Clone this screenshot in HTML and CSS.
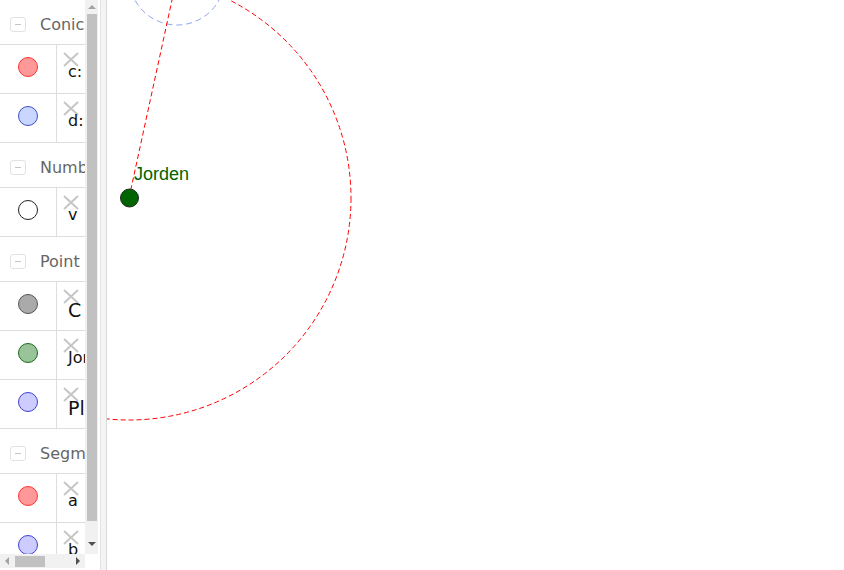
FILE: index.html
```html
<!DOCTYPE html>
<html>
<head>
<meta charset="utf-8">
<link rel="stylesheet" href="styles.css">
</head>
<body>
<div class="app">
  <aside class="sidebar">
    <div class="pane">
      <div class="list">
        <div class="group">
          <div class="head"><span class="toggle"><span class="minus"></span></span><span class="title">Conic</span></div>
          <div class="row">
            <div class="swatch"><span class="dot dot-red"></span></div>
            <div class="item"><svg class="del" viewBox="0 0 16 15"><path d="M1 1 L15 14 M15 1 L1 14"/></svg><span class="label">c:</span></div>
          </div>
          <div class="row">
            <div class="swatch"><span class="dot dot-blue"></span></div>
            <div class="item"><svg class="del" viewBox="0 0 16 15"><path d="M1 1 L15 14 M15 1 L1 14"/></svg><span class="label">d:</span></div>
          </div>
        </div>
        <div class="group">
          <div class="head"><span class="toggle"><span class="minus"></span></span><span class="title">Numbers</span></div>
          <div class="row">
            <div class="swatch"><span class="dot dot-white"></span></div>
            <div class="item"><svg class="del" viewBox="0 0 16 15"><path d="M1 1 L15 14 M15 1 L1 14"/></svg><span class="label">v</span></div>
          </div>
        </div>
        <div class="group">
          <div class="head"><span class="toggle"><span class="minus"></span></span><span class="title">Point</span></div>
          <div class="row">
            <div class="swatch"><span class="dot dot-gray"></span></div>
            <div class="item"><svg class="del" viewBox="0 0 16 15"><path d="M1 1 L15 14 M15 1 L1 14"/></svg><span class="label label-big">C</span></div>
          </div>
          <div class="row">
            <div class="swatch"><span class="dot dot-green"></span></div>
            <div class="item"><svg class="del" viewBox="0 0 16 15"><path d="M1 1 L15 14 M15 1 L1 14"/></svg><span class="label">Jorden</span></div>
          </div>
          <div class="row">
            <div class="swatch"><span class="dot dot-violet"></span></div>
            <div class="item"><svg class="del" viewBox="0 0 16 15"><path d="M1 1 L15 14 M15 1 L1 14"/></svg><span class="label label-big">Planet</span></div>
          </div>
        </div>
        <div class="group">
          <div class="head"><span class="toggle"><span class="minus"></span></span><span class="title">Segment</span></div>
          <div class="row">
            <div class="swatch"><span class="dot dot-red"></span></div>
            <div class="item"><svg class="del" viewBox="0 0 16 15"><path d="M1 1 L15 14 M15 1 L1 14"/></svg><span class="label">a</span></div>
          </div>
          <div class="row">
            <div class="swatch"><span class="dot dot-violet"></span></div>
            <div class="item"><svg class="del" viewBox="0 0 16 15"><path d="M1 1 L15 14 M15 1 L1 14"/></svg><span class="label">b</span></div>
          </div>
        </div>
      </div>
      <div class="vscroll">
        <div class="vbtn"><span class="tri-up"></span></div>
        <div class="vthumb"></div>
        <div class="vgap"></div>
        <div class="vbtn"><span class="tri-down"></span></div>
      </div>
    </div>
    <div class="hrow">
      <div class="hscroll">
        <div class="hbtn"><span class="tri-left"></span></div>
        <div class="hthumb"></div>
        <div class="hgap"></div>
        <div class="hbtn"><span class="tri-right"></span></div>
      </div>
      <div class="corner"></div>
    </div>
  </aside>
  <div class="splitter"></div>
  <main class="canvas">
    <svg class="board" width="737" height="570" viewBox="107 0 737 570">
      <circle cx="177" cy="-23" r="48" fill="none" stroke="#8ea4ea" stroke-width="1" stroke-dasharray="6 4"/>
      <circle cx="129" cy="198" r="222" fill="none" stroke="#ff0000" stroke-width="1" stroke-dasharray="5 3"/>
      <line x1="129" y1="198" x2="177" y2="-23" stroke="#ff0000" stroke-width="1" stroke-dasharray="5 3"/>
      <circle cx="129.5" cy="198" r="9" fill="#006400" stroke="#1e2a1e" stroke-width="1"/>
      <text x="134" y="180" class="ptlabel">Jorden</text>
    </svg>
  </main>
</div>
</body>
</html>
```
FILE: styles.css
```css
html, body {
  margin: 0;
  padding: 0;
  background: #ffffff;
}
.app {
  display: flex;
  width: 844px;
  height: 570px;
  overflow: hidden;
  font-family: "DejaVu Sans", sans-serif;
}
.sidebar {
  width: 98px;
  display: flex;
  flex-direction: column;
  flex: none;
}
.pane {
  display: flex;
  height: 554px;
}
.list {
  width: 85px;
  overflow: hidden;
  background: #fff;
}
.head {
  border-bottom: 1px solid #dddddd;
  display: flex;
  align-items: center;
  padding-top: 5px;
  box-sizing: border-box;
  height: 45px;
  white-space: nowrap;
}
.toggle {
  flex: none;
  width: 14px;
  height: 13px;
  margin-left: 10px;
  margin-right: 14px;
  border: 1px solid #e2e2e2;
  border-radius: 3px;
  display: flex;
  align-items: center;
  justify-content: center;
}
.minus {
  width: 6px;
  height: 1px;
  background: #c4c4c4;
}
.title {
  font-size: 16px;
  color: #666666;
  line-height: 20px;
}
.row {
  display: flex;
  height: 49px;
  box-sizing: border-box;
  border-bottom: 1px solid #dddddd;
  white-space: nowrap;
}
.swatch {
  width: 56px;
  flex: none;
  border-right: 1px solid #dddddd;
  padding-top: 12px;
}
.dot {
  display: block;
  width: 18px;
  height: 18px;
  border-radius: 50%;
  margin-left: 18px;
  border: 1px solid;
}
.dot-red { background: #ff9999; border-color: #ff3333; }
.dot-blue { background: #c9d6ff; border-color: #3c4fc4; }
.dot-white { background: #ffffff; border-color: #222222; }
.dot-gray { background: #aaaaaa; border-color: #555555; }
.dot-green { background: #99c499; border-color: #1a6b1a; }
.dot-violet { background: #ccccff; border-color: #4040d0; }
.item {
  flex: none;
  padding-left: 6px;
  display: flex;
  flex-direction: column;
}
.del {
  display: block;
  width: 16px;
  height: 15px;
  margin-top: 7px;
  fill: none;
  stroke: #c6c6c6;
  stroke-width: 2;
}
.label {
  display: block;
  font-size: 16px;
  line-height: 20px;
  margin-top: -5px;
  margin-left: 5px;
  color: #111;
}
.label-big {
  font-size: 19px;
  line-height: 24px;
  margin-top: -6px;
}
.vscroll {
  width: 13px;
  flex: none;
  background: #f1f1f1;
  display: flex;
  flex-direction: column;
  padding-bottom: 3px;
  box-sizing: border-box;
}
.vbtn {
  height: 14px;
  display: flex;
  align-items: center;
  justify-content: center;
  flex: none;
}
.vthumb {
  height: 507px;
  margin: 0 1px 0 2px;
  background: #c1c1c1;
  flex: none;
}
.vgap { flex: 1; }
.tri-up {
  width: 0; height: 0;
  border-left: 4px solid transparent;
  border-right: 4px solid transparent;
  border-bottom: 4px solid #a3a3a3;
}
.tri-down {
  width: 0; height: 0;
  border-left: 4px solid transparent;
  border-right: 4px solid transparent;
  border-top: 4px solid #505050;
}
.hrow {
  display: flex;
  height: 16px;
}
.hscroll {
  width: 85px;
  height: 14px;
  background: #f1f1f1;
  display: flex;
  align-items: stretch;
}
.hbtn {
  width: 14px;
  display: flex;
  align-items: center;
  justify-content: center;
  flex: none;
}
.hthumb {
  width: 30px;
  margin: 2px 0 1px 1px;
  background: #c1c1c1;
}
.hgap { flex: 1; }
.tri-left {
  width: 0; height: 0;
  border-top: 4px solid transparent;
  border-bottom: 4px solid transparent;
  border-right: 4px solid #a3a3a3;
}
.tri-right {
  width: 0; height: 0;
  border-top: 4px solid transparent;
  border-bottom: 4px solid transparent;
  border-left: 4px solid #505050;
}
.corner {
  flex: 1;
  background: #fff;
}
.splitter {
  flex: none;
  margin-left: 2px;
  width: 5px;
  background: #f4f4f4;
  border-left: 1px solid #e3e3e3;
  border-right: 1px solid #d9d9d9;
}
.canvas {
  flex: 1;
  background: #ffffff;
  overflow: hidden;
}
.board {
  display: block;
}
.ptlabel {
  font-family: "Liberation Sans", Arial, sans-serif;
  font-size: 18px;
  fill: #006400;
}
```
